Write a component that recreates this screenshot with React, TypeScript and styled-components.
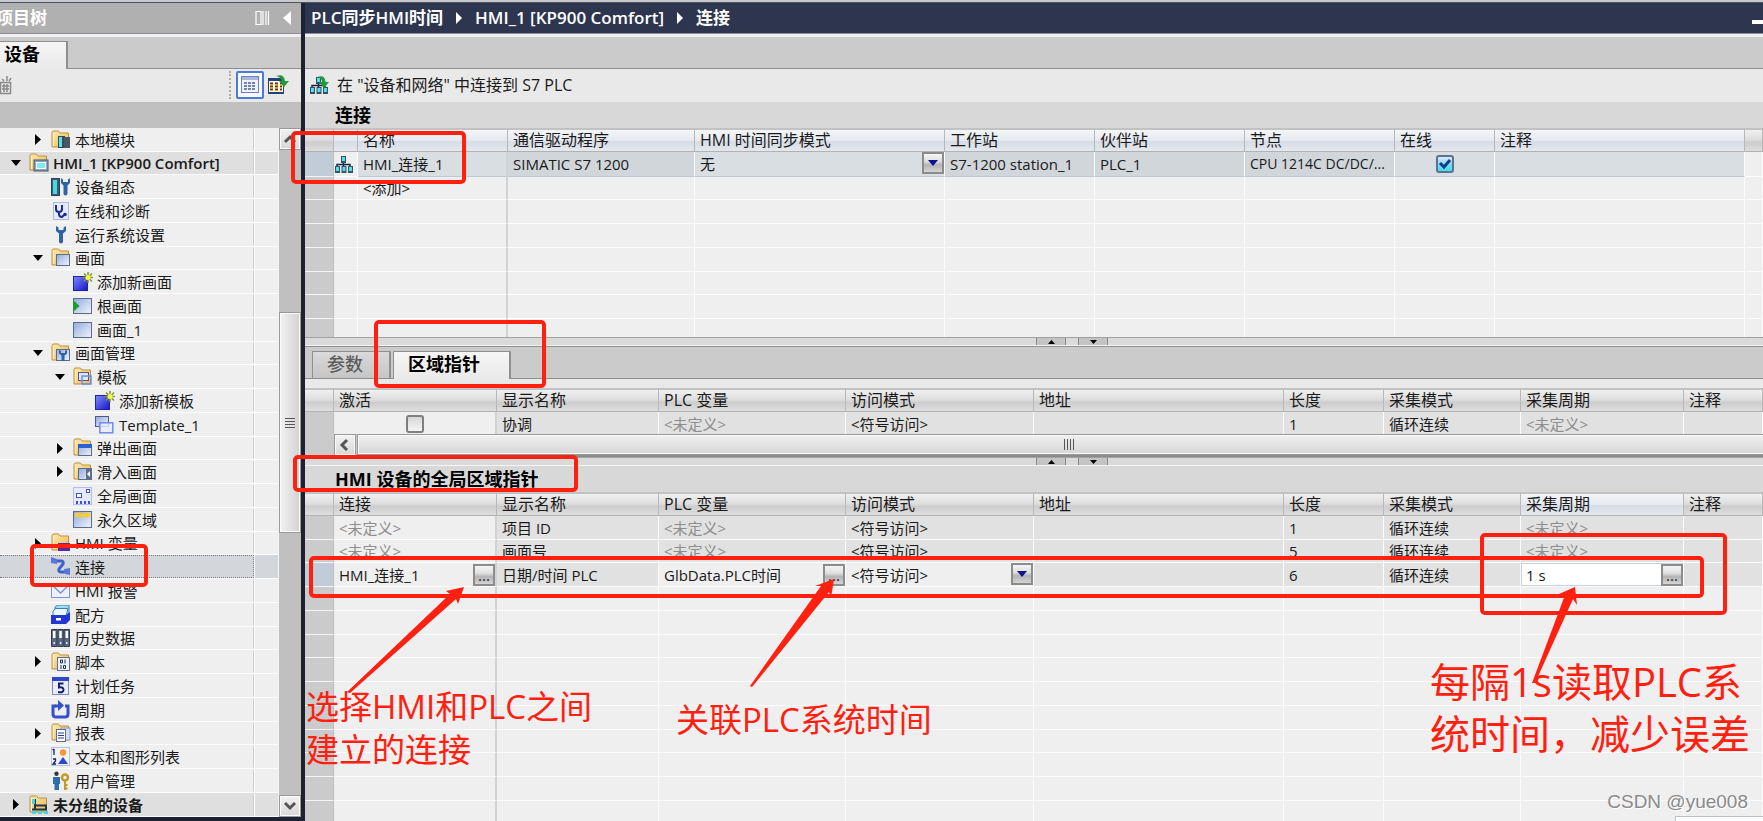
import React from 'react';
import styled, { createGlobalStyle, css } from 'styled-components';

const Global = createGlobalStyle`
  *, *::before, *::after { box-sizing: border-box; }
  html, body { margin: 0; height: 100%; overflow: hidden; }
  body {
    font-family: "Open Sans", "Noto Sans CJK SC", sans-serif;
    font-size: 15px;
    line-height: 20px;
    color: #1a1a1a;
    background: #efefef;
  }
  button, input, select { font: inherit; color: inherit; margin: 0; }
  svg { flex: none; }
`;

const rowRhythm = css`
  height: 24px;
  &:nth-child(4n + 2) { height: 23px; }
`;

/* ---------- frame ---------- */
const Page = styled.div`
  position: relative;
  display: flex;
  flex-direction: column;
  height: 100vh;
  overflow: hidden;
`;
const TopEdge = styled.div`
  flex: none;
  height: 3px;
  background: #c9c9c9;
  border-bottom: 1px solid #4b5468;
`;
const Body = styled.div`
  flex: 1;
  min-height: 0;
  display: flex;
`;
const TitleBar = styled.header<{ $dark?: boolean }>`
  flex: none;
  display: flex;
  align-items: center;
  height: 31px;
  padding-right: ${p => (p.$dark ? '0' : '8px')};
  background: ${p => (p.$dark ? '#2e364f' : '#b0b0b0')};
  border-bottom: 1px solid #8c8f99;
  color: #fff;
  font-size: 17px;
  font-weight: 600;
  white-space: nowrap;
`;
const TabStrip = styled.div<{ $plain?: boolean }>`
  flex: none;
  display: flex;
  align-items: flex-end;
  gap: 2px;
  height: ${p => (p.$plain ? '33px' : '35px')};
  padding-left: ${p => (p.$plain ? '7px' : '0')};
  background: #cbcbcb;
  border-top: ${p => (p.$plain ? '1px solid #8f8f8f' : '3px solid #f0f0f2')};
  border-bottom: 1px solid #8f8f8f;
`;
const Tab = styled.button<{ $active?: boolean; $w?: number }>`
  width: ${p => (p.$w ? `${p.$w}px` : 'auto')};
  height: ${p => (p.$active ? '28px' : '27px')};
  margin-bottom: ${p => (p.$active ? '-1px' : '0')};
  padding: 0 0 3px 14px;
  border: 1px solid #8f8f8f;
  border-bottom: 0;
  border-right-width: 2px;
  background: ${p => (p.$active ? 'linear-gradient(#f6f6f6, #e9e9e9)' : 'linear-gradient(#dadada, #cfcfcf 50%, #c6c6c6)')};
  color: ${p => (p.$active ? '#000' : '#5c5c5c')};
  font-size: 18px;
  line-height: 22px;
  font-weight: ${p => (p.$active ? 700 : 500)};
  text-align: left;
  white-space: nowrap;
`;
const ToolBar = styled.div`
  flex: none;
  display: flex;
  align-items: center;
  height: 33px;
  padding-bottom: 2px;
  background: #e9e9e9;
  white-space: nowrap;
`;

/* ---------- project tree ---------- */
const Sidebar = styled.aside`
  flex: none;
  display: flex;
  flex-direction: column;
  width: 305px;
  border-right: 4px solid #1c2233;
  border-bottom: 4px solid #1c2233;
  background: #c0c0c0;
`;
const SideTools = styled(ToolBar)`
  padding-right: 9px;
`;
const SideTitle = styled.span`
  flex: 1;
  margin-left: -4px;
`;
const SideTab = styled(Tab)`
  padding-left: 4px;
  border-left: 0;
`;
const IconButton = styled.button<{ $on?: boolean }>`
  display: flex;
  align-items: center;
  justify-content: center;
  width: 28px;
  height: 28px;
  padding: 0;
  border: ${p => (p.$on ? '2px solid #4a7bd8' : '0')};
  border-radius: 2px;
  background: ${p => (p.$on ? '#f7f9ff' : 'none')};
`;
const Clipped = styled(IconButton)`
  width: 12px;
  margin-right: auto;
  justify-content: flex-end;
  overflow: hidden;
`;
const Dots = styled.span`
  height: 28px;
  margin-right: 5px;
  border-left: 2px dotted #aaa;
`;
const TreeArea = styled.div`
  flex: 1;
  min-height: 0;
  display: flex;
  margin-top: 26px;
  overflow: hidden;
`;
const Tree = styled.ul`
  flex: 1;
  margin: 0;
  padding: 0;
  list-style: none;
  background: #efefef;
`;
const TreeRow = styled.li<{ $strong?: boolean; $sel?: boolean }>`
  ${rowRhythm}
  display: flex;
  border-bottom: 1px solid #fcfcfc;
  background: ${p => (p.$sel ? '#d3d7db' : p.$strong ? '#dfdfdf' : '#efefef')};
  font-weight: ${p => (p.$strong ? 600 : 400)};
`;
const TreeCell = styled.div<{ $level: number; $sel?: boolean }>`
  flex: 1;
  display: flex;
  align-items: center;
  padding-left: ${p => p.$level * 22 - 15}px;
  border: 1px ${p => (p.$sel ? 'dotted #777' : 'solid transparent')};
  border-left: 0;
  border-right: ${p => (p.$sel ? '1px dotted #777' : '1px solid #cdcdcd')};
  white-space: nowrap;
`;
const TreeSide = styled.div`
  flex: none;
  width: 24px;
  border-left: 1px solid #fff;
`;
const Toggle = styled.button`
  display: flex;
  align-items: center;
  justify-content: center;
  flex: none;
  width: 18px;
  height: 18px;
  margin-right: 4px;
  padding: 0;
  border: 0;
  background: none;
`;
const ToggleGap = styled.span`
  flex: none;
  width: 22px;
`;
const TreeLabel = styled.span`
  margin-left: 4px;
`;

/* ---------- scroll bars ---------- */
const VScroll = styled.div`
  flex: none;
  display: flex;
  flex-direction: column;
  width: 23px;
  border-left: 1px solid #f2f2f2;
  background: #c0c0c0;
`;
const ScrollButton = styled.button`
  display: flex;
  align-items: center;
  justify-content: center;
  flex: none;
  width: 22px;
  height: 22px;
  padding: 0;
  border: 1px solid #9a9a9a;
  background: linear-gradient(#f2f2f2, #d8d8d8);
  box-shadow: inset 0 0 0 1px #fafafa;
`;
const VGap = styled.div`
  height: 162px;
`;
const VFill = styled.div`
  flex: 1;
`;
const VThumb = styled.div`
  display: flex;
  flex-direction: column;
  align-items: center;
  justify-content: center;
  gap: 2px;
  height: 221px;
  border: 1px solid #9a9a9a;
  background: linear-gradient(90deg, #f2f2f2, #d2d2d2);
  box-shadow: inset 0 0 0 1px #fafafa;
`;
const VGrip = styled.i`
  width: 10px;
  height: 1px;
  background: #555;
`;
const HScroll = styled.div`
  flex: none;
  display: flex;
  height: 23px;
  padding-left: 29px;
  gap: 1px;
  background: #cbcbcb;
  border-bottom: 2px solid #8a8a8a;
`;
const HThumb = styled.div`
  flex: 1;
  display: flex;
  align-items: center;
  justify-content: center;
  gap: 2px;
  margin-right: -17px;
  border: 1px solid #9a9a9a;
  background: linear-gradient(#f0f0f0, #d6d6d6);
  box-shadow: inset 0 0 0 1px #fafafa;
`;
const HGrip = styled.i`
  width: 1px;
  height: 11px;
  background: #555;
`;

/* ---------- editor ---------- */
const Main = styled.main`
  flex: 1;
  min-width: 0;
  display: flex;
  flex-direction: column;
  background: #efefef;
`;
const Crumbs = styled.nav`
  flex: 1;
  display: flex;
  align-items: center;
  gap: 13px;
  padding-left: 6px;
`;
const Crumb = styled.a`
  color: inherit;
  text-decoration: none;
`;
const Minimize = styled.button`
  width: 11px;
  height: 4px;
  margin-top: 8px;
  padding: 0;
  border: 0;
  background: #fff;
`;
const ToolLink = styled.button`
  display: flex;
  align-items: center;
  gap: 8px;
  padding: 0 4px;
  border: 0;
  background: none;
  font-size: 16px;
`;
const Caption = styled.h2`
  flex: none;
  height: 26px;
  margin: 0;
  padding-left: 30px;
  background: #d8d8d8;
  color: #000;
  font-size: 18px;
  line-height: 26px;
  font-weight: 700;
`;
const Spacer = styled.div`
  flex: none;
  height: 9px;
  background: #e9e9e9;
`;
const Pane = styled.section<{ $height?: number }>`
  flex: ${p => (p.$height ? 'none' : '1')};
  height: ${p => (p.$height ? `${p.$height}px` : 'auto')};
  min-height: 0;
  overflow: hidden;
`;
const Splitter = styled.div`
  flex: none;
  display: flex;
  justify-content: center;
  gap: 12px;
  height: 9px;
  padding-left: 76px;
  border-top: 1px solid #a2a2a2;
  border-bottom: 1px solid #f5f5f5;
  background: #dadada;
`;
const SplitButton = styled.button`
  display: flex;
  align-items: center;
  justify-content: center;
  width: 30px;
  height: 7px;
  padding: 0;
  border: solid #8a8a8a;
  border-width: 0 1px;
  background: #c4c4c4;
`;

const Grid = styled.table`
  width: 100%;
  table-layout: fixed;
  border-collapse: separate;
  border-spacing: 0;
`;
const Head = styled.th<{ $tone?: 'blue' | 'grey' }>`
  height: 24px;
  padding: 0 5px 1px;
  border-top: 2px solid #c2c2c2;
  border-bottom: 1px solid #b2b2b2;
  border-right: 1px solid #b8b8b8;
  background: ${p => (p.$tone === 'blue'
    ? 'linear-gradient(#f3f5f7, #e6eaef 50%, #d6dce6 55%, #e4e8ee)'
    : 'linear-gradient(#f0f0f0, #dedede 45%, #cdcdcd 60%, #dedede)')};
  font-size: 16px;
  line-height: 20px;
  font-weight: 400;
  text-align: left;
  white-space: nowrap;
  overflow: hidden;
`;
const Row = styled.tr`
  ${rowRhythm}
`;
const LinkRow = styled.tr`
  height: 25px;
`;
type Tone = 'plain' | 'off' | 'sel' | 'selLight' | 'white';
const tones: Record<Tone, string> = {
  plain: '#efefef', off: '#e1e1e1', sel: '#d1d6db', selLight: '#d9dee3', white: '#ffffff',
};
const Cell = styled.td<{ $tone?: Tone; $frozen?: boolean; $muted?: boolean; $flush?: boolean; $small?: boolean }>`
  position: relative;
  padding: ${p => (p.$flush ? '0' : '0 0 0 5px')};
  border-bottom: 1px solid ${p => (p.$tone === 'sel' || p.$tone === 'selLight' ? '#bccad8' : '#fcfcfc')};
  border-right: ${p => (p.$frozen ? '2px solid #d2d2d2' : '1px solid #fcfcfc')};
  background: ${p => tones[p.$tone || 'plain']};
  color: ${p => (p.$muted ? '#8e8e8e' : 'inherit')};
  font-size: ${p => (p.$small ? '14px' : 'inherit')};
  line-height: 20px;
  white-space: nowrap;
  overflow: hidden;
  text-overflow: ellipsis;
  ${p => p.$tone === 'white' && css`box-shadow: inset 0 0 0 1px #c6d2e0;`}
`;
const Gutter = styled.td<{ $on?: boolean }>`
  padding: 0;
  border-right: 1px solid #bdbdbd;
  border-bottom: 1px solid #f4f4f4;
  background: ${p => (p.$on ? '#c1ccd8' : '#cbcbcb')};
`;
const Check = styled.input`
  appearance: none;
  display: block;
  width: 18px;
  height: 18px;
  margin: 0 auto;
  border: 2px solid #7f7f7f;
  border-radius: 3px;
  background: linear-gradient(#d8d8d8, #f4f4f4);
  &:checked {
    border-color: #5a7390;
    background:
      linear-gradient(#dce8ff, #8fd4ee 50%, #3fe0f0);
  }
`;
const CheckWrap = styled.label`
  position: relative;
  display: block;
  width: 18px;
  margin: 0 auto;
  svg { position: absolute; left: 2px; top: 2px; }
`;
const Field = styled.div`
  display: flex;
  align-items: center;
  height: 22px;
`;
const TextBox = styled.input`
  flex: 1;
  min-width: 0;
  height: 20px;
  padding: 0 5px;
  border: 0;
  outline: 0;
  background: none;
`;
const Choice = styled.select`
  appearance: none;
  width: 100%;
  height: 22px;
  padding: 0 24px 0 5px;
  border: 0;
  background: none;
`;
const smallButton = css`
  display: flex;
  justify-content: center;
  width: 22px;
  height: 22px;
  border: 2px solid #8c8c8c;
  background: linear-gradient(#f4f4f4, #e0e0e0 40%, #b4b4b4 60%, #d4d4d4);
`;
const More = styled.button`
  ${smallButton}
  flex: none;
  padding: 0;
  align-items: flex-end;
  color: #222;
  line-height: 18px;
`;
const DropArrow = styled.span`
  ${smallButton}
  position: absolute;
  right: 0;
  top: 0;
  align-items: center;
  pointer-events: none;
`;

/* ---------- annotations ---------- */
const Notes = styled.div`
  position: absolute;
  inset: 0;
  pointer-events: none;
  overflow: hidden;
`;
const Frame = styled.div<{ $x: number; $y: number; $w: number; $h: number }>`
  position: absolute;
  left: ${p => p.$x}px;
  top: ${p => p.$y}px;
  width: ${p => p.$w}px;
  height: ${p => p.$h}px;
  border: 4px solid #ff2010;
  border-radius: 5px;
`;
const Note = styled.p<{ $x: number; $y: number; $big?: boolean }>`
  position: absolute;
  left: ${p => p.$x}px;
  top: ${p => p.$y}px;
  margin: 0;
  color: #ff2010;
  font-size: ${p => (p.$big ? 40 : 33)}px;
  line-height: ${p => (p.$big ? 52 : 43)}px;
  font-weight: 400;
  white-space: nowrap;
`;
const Arrows = styled.svg`
  position: absolute;
  left: 0;
  top: 0;
`;
const Watermark = styled.div`
  position: absolute;
  right: 15px;
  bottom: 7px;
  color: #8a8a8a;
  font-family: "Liberation Sans", sans-serif;
  font-size: 19px;
  line-height: 24px;
  text-shadow: 1px 1px 0 #fff;
`;
const Popup = styled.div`
  position: absolute;
  right: 0;
  bottom: 0;
  width: 88px;
  height: 5px;
  border: solid #b4c2d6;
  border-width: 1px 0 0 1px;
  background: #fff;
`;

/* ---------- icons ---------- */
type IconName =
  | 'module' | 'hmi' | 'config' | 'diag' | 'wrench' | 'screens' | 'add' | 'root' | 'screen'
  | 'manage' | 'templates' | 'template' | 'popup' | 'slidein' | 'global' | 'permanent' | 'tags'
  | 'link' | 'alarm' | 'recipe' | 'history' | 'script' | 'task' | 'cycle' | 'report' | 'lists'
  | 'users' | 'devices';

const Folder = () => (
  <>
    <path d="M1 2.500 L2 1 H7.500 L9 3 H17.500 V17 H1 Z" fill="url(#folder)" stroke="#c0913c" />
    <path d="M2.500 3 V16" stroke="#fff3cf" />
  </>
);
const Sheet = ({ x = 5, y = 6, w = 14, h = 12 }: { x?: number; y?: number; w?: number; h?: number }) => (
  <rect x={x + 0.5} y={y + 0.5} width={w - 1} height={h - 1} fill="url(#sheet)" stroke="#5b6b8c" />
);
const wrenchPath = 'M5 1 V6 L8 8.500 V17 Q10 20 12 17 V8.500 L15 6 V1 L12.500 2.500 V5 H7.500 V2.500 Z';

const drawings: Record<IconName, React.ReactNode> = {
  module: <><Folder /><rect x="7" y="6" width="7" height="12" fill="#3a4a5c" /><rect x="8" y="7" width="3" height="10" fill="#5ce0e6" /><rect x="13" y="7" width="6" height="11" fill="#4a5866" /></>,
  hmi: <><Folder /><rect x="5" y="7" width="14" height="11" fill="#8ea3bb" stroke="#47566e" /><rect x="7.500" y="9.500" width="9" height="6" fill="#7ceaf0" stroke="#fff" /></>,
  config: <><rect x=".500" y="1.500" width="8" height="17" fill="#3d5a72" stroke="#2c4258" /><rect x="2" y="3" width="4" height="14" fill="#46dbe3" /><path d="M10 1 V6 L12.500 8.500 V17 Q14.500 20 16.500 17 V8.500 L19 6 V1 L17 2.500 V5 H12 V2.500 Z" fill="#2d63a8" /></>,
  diag: <><rect x="2.500" y="1.500" width="15" height="17" fill="#e4e9fb" stroke="#aeb8dc" /><path d="M5 4 V8 Q5 11 8 11 Q11 11 11 8 V4 M8 11 V13 Q8 16 11 16 L13 14" fill="none" stroke="#1d2a8c" strokeWidth="2" /><circle cx="14" cy="13.500" r="1.800" fill="#1d2a8c" /></>,
  wrench: <path d={wrenchPath} fill="#2d63a8" />,
  screens: <><Folder /><Sheet /></>,
  add: <><rect x=".500" y="4.500" width="14" height="14" fill="url(#blue)" stroke="#1d22a8" /><path d="M15 0 V11 M9.500 5.500 H20 M11 1.500 L19 9.500 M19 1.500 L11 9.500" stroke="#7f9a2a" strokeWidth="1.500" /><circle cx="15" cy="5.500" r="2.500" fill="#f8f84a" /></>,
  root: <><Sheet x={0} y={2} w={19} h={16} /><path d="M0 4 L6.500 10 L0 16 Z" fill="#1d9a30" /></>,
  screen: <Sheet x={0} y={2} w={19} h={16} />,
  manage: <><Folder /><Sheet /><path d="M8 7 V10.500 L10.500 12.500 V18 H13.500 V12.500 L16 10.500 V7 L14 8 V10 H10 V8 Z" fill="#2d63a8" /></>,
  templates: <><Folder /><rect x="5.500" y="5.500" width="10" height="8" fill="#dfe6f8" stroke="#4d5c84" /><rect x="9" y="9" width="9" height="8" fill="none" stroke="#6d8cf0" strokeWidth="1.500" /></>,
  template: <><rect x=".500" y="1.500" width="13" height="10" fill="url(#sheet)" stroke="#4d5c84" /><rect x="4.800" y="7.800" width="13" height="10" fill="#e8eeff" fillOpacity=".8" stroke="#6d8cf0" strokeWidth="1.500" /></>,
  popup: <><Folder /><Sheet /><rect x="5" y="6" width="14" height="4" fill="#2c5fd0" /></>,
  slidein: <><Folder /><Sheet /><rect x="13" y="6" width="6" height="12" fill="#5f6f88" /><path d="M17 9 V15 L14 12 Z" fill="#fff" /></>,
  global: <><rect x=".500" y="1.500" width="18" height="17" fill="#e6eaff" stroke="#b4bce8" /><rect x="3.500" y="7.500" width="5" height="4" fill="#fff" stroke="#3d50d8" /><rect x="13.500" y="3.500" width="3" height="3" fill="#fff" stroke="#3d50d8" /><path d="M3 16.500 H17" stroke="#3d50d8" strokeWidth="3" strokeDasharray="2 2" /></>,
  permanent: <><Sheet x={0} y={1} w={19} h={17} /><rect x="2" y="3" width="15" height="4" fill="#ffcb2d" /></>,
  tags: <><Folder /><rect x="7" y="10" width="12" height="8" fill="#5a2a9c" /><path d="M9 14 H17" stroke="#fff" strokeWidth="2" /></>,
  link: <><path d="M4 4 H10 Q13 4 12 7 L8 12 Q7 15 10 15 H16" fill="none" stroke="#3f62cc" strokeWidth="3" /><path d="M0 0 L6 2 V7 L0 6 Z M13 12 L19 11 V18 L14 17 Z" fill="#5878d8" /></>,
  alarm: <><rect x=".500" y="3.500" width="18" height="13" fill="#eef2ff" stroke="#7f92e0" /><path d="M1 4 L9.500 12 L18 4" fill="none" stroke="#7f92e0" strokeWidth="1.500" /></>,
  recipe: <><path d="M4 2 L7 0 H18 V8 L15 11 H4 Z" fill="#9fdcf2" stroke="#3a7fb8" /><path d="M2 6 L5 3.500 H17 L15 11 H2 Z" fill="#e8f8ff" stroke="#3a7fb8" /><path d="M0 10 H15 L19 7 V15 L15 19 H0 Z" fill="#2236d4" /><rect x="5" y="13" width="5" height="2.500" fill="#fff" /></>,
  history: <><path d="M.500 1.500 H6 V18.500 H.500 Z M6.800 1.500 H12.300 V18.500 H6.800 Z M13 1.500 H18.500 V18.500 H13 Z" fill="#5b6a84" stroke="#2f3b52" /><path d="M3.200 3 V10 M9.500 3 V10 M15.800 3 V10" stroke="#fff" strokeWidth="2.500" /><path d="M2.500 15 H4 M8.800 15 H10.300 M15 15 H16.500" stroke="#dfe8f4" strokeWidth="2" /></>,
  script: <><Folder /><rect x="6.500" y="5.500" width="12" height="13" fill="#eef4fc" stroke="#5b7296" /><path d="M9.500 8 H11.500 V11 H9.500 Z M10 13 V17 M12.500 13.500 H14.500 V16.500 H12.500 Z M14 7.500 V11.500" fill="none" stroke="#1d2c6c" /></>,
  task: <><rect x="1.500" y="1.500" width="16" height="17" fill="#e9edff" stroke="#7c8cc0" /><rect x="1" y="1" width="17" height="4" fill="#2f48c8" /><path d="M12.500 7.500 H8 V11.500 Q12.500 10.500 12.500 14 Q12.500 17 7 16" fill="none" stroke="#17206c" strokeWidth="2" /></>,
  cycle: <><path d="M5 6 H2 V14 Q2 17 5 17 H14 Q17 17 17 14 V6 H14" fill="none" stroke="#3450cc" strokeWidth="3" /><path d="M4 4.500 H7 V0 L13 5.500 L7 11 V7.500 H4 Z" fill="#3450cc" /></>,
  report: <><Folder /><rect x="10" y="5" width="9" height="12" fill="#d5dcf4" stroke="#8a9ac8" /><rect x="5.500" y="6.500" width="9" height="12" fill="#fff" stroke="#5b6b9c" /><path d="M7 10 H13 M7 12.500 H13 M7 15 H13" stroke="#2a3a8c" strokeWidth="1.200" /></>,
  lists: <><rect x=".500" y=".500" width="18" height="18" fill="#f0f3ff" stroke="#b8c0e4" /><path d="M3 2 V8 M1.500 3 L3 2 M2 12 H4.500 V14 L2 17 H5" fill="none" stroke="#17206c" strokeWidth="1.300" /><circle cx="12" cy="5.500" r="3.200" fill="#f59a2c" /><path d="M12 10 L17 17 H7 Z" fill="#2c48c8" /></>,
  users: <><circle cx="5.500" cy="2.800" r="2.200" fill="#3c3430" /><path d="M2 6 H9 V13 H8 V19 H3.500 V13 H2 Z" fill="#2d6ea8" /><circle cx="14" cy="6.500" r="3" fill="none" stroke="#c49a28" strokeWidth="2.500" /><path d="M14 10 V19 M14 14 H16.500 M14 17.500 H16.500" stroke="#c49a28" strokeWidth="2" /></>,
  devices: <><Folder /><path d="M6 10.500 H18 M6 4 V15 M17 10 V15 M3 14.500 H18" stroke="#263248" strokeWidth="2" /><rect x="3" y="4" width="3" height="5" fill="#43d8e0" /><rect x="3" y="16" width="4" height="3" fill="#43d8e0" /><rect x="9" y="16" width="4" height="3" fill="#43d8e0" /><rect x="15" y="16" width="4" height="3" fill="#43d8e0" /></>,
};

const Defs = styled.svg`
  position: absolute;
`;
const IconDefs = () => (
  <Defs width="0" height="0" aria-hidden="true">
    <defs>
      <linearGradient id="folder" x1="0" y1="0" x2="1" y2="1"><stop offset="0" stopColor="#ffe9ae" /><stop offset="1" stopColor="#e9b955" /></linearGradient>
      <linearGradient id="sheet" x1="0" y1="0" x2="1" y2="1"><stop offset="0" stopColor="#93a9dc" /><stop offset="1" stopColor="#f2f5fd" /></linearGradient>
      <linearGradient id="blue" x1="0" y1="0" x2="1" y2="1"><stop offset="0" stopColor="#7f8cff" /><stop offset="1" stopColor="#1414c8" /></linearGradient>
    </defs>
  </Defs>
);
const Icon = ({ name }: { name: IconName }) => (
  <svg width="20" height="20" viewBox="0 0 20 20" aria-hidden="true">{drawings[name]}</svg>
);
const Net = ({ arrow }: { arrow?: boolean }) => (
  <svg width="20" height="20" viewBox="0 0 20 20" aria-hidden="true">
    <path d="M9.500 7 V13 M3 14 V10.500 H16 V14" fill="none" stroke="#1a2440" strokeWidth="1.500" />
    {[[7, 2], [1, 12], [7.500, 12], [14, 12]].map(([x, y]) => (
      <g key={`${x}-${y}`}><rect x={x} y={y} width="5" height="7" fill="#3a4e68" /><rect x={x + 1} y={y + 1} width="3" height="4" fill="#4be3ea" /></g>
    ))}
    {arrow && <path d="M8 2 Q16 -1 16.500 7 H20 L15 13 L10 7 H13 Q13 3 8 2 Z" fill="#239a3a" />}
  </svg>
);
const Tri = ({ dir, color = '#000', w = 10, h = 6 }: { dir: 'r' | 'd' | 'u' | 'l'; color?: string; w?: number; h?: number }) => {
  const pts = { d: `0,0 ${w},0 ${w / 2},${h}`, u: `0,${h} ${w},${h} ${w / 2},0`, r: `0,0 ${w},${h / 2} 0,${h}`, l: `${w},0 0,${h / 2} ${w},${h}` }[dir];
  return <svg width={w} height={h} aria-hidden="true"><polygon points={pts} fill={color} /></svg>;
};
const Chevron = ({ d }: { d: string }) => (
  <svg width="14" height="14" viewBox="0 0 14 14" aria-hidden="true"><path d={d} fill="none" stroke="#555" strokeWidth="3" /></svg>
);

/* ---------- data ---------- */
type Node = { label: string; icon: IconName; level: number; open?: boolean; strong?: boolean; sel?: boolean };
const nodes: Node[] = [
  { label: '本地模块', icon: 'module', level: 2, open: false },
  { label: 'HMI_1 [KP900 Comfort]', icon: 'hmi', level: 1, open: true, strong: true },
  { label: '设备组态', icon: 'config', level: 2 },
  { label: '在线和诊断', icon: 'diag', level: 2 },
  { label: '运行系统设置', icon: 'wrench', level: 2 },
  { label: '画面', icon: 'screens', level: 2, open: true },
  { label: '添加新画面', icon: 'add', level: 3 },
  { label: '根画面', icon: 'root', level: 3 },
  { label: '画面_1', icon: 'screen', level: 3 },
  { label: '画面管理', icon: 'manage', level: 2, open: true },
  { label: '模板', icon: 'templates', level: 3, open: true },
  { label: '添加新模板', icon: 'add', level: 4 },
  { label: 'Template_1', icon: 'template', level: 4 },
  { label: '弹出画面', icon: 'popup', level: 3, open: false },
  { label: '滑入画面', icon: 'slidein', level: 3, open: false },
  { label: '全局画面', icon: 'global', level: 3 },
  { label: '永久区域', icon: 'permanent', level: 3 },
  { label: 'HMI 变量', icon: 'tags', level: 2, open: false },
  { label: '连接', icon: 'link', level: 2, sel: true },
  { label: 'HMI 报警', icon: 'alarm', level: 2 },
  { label: '配方', icon: 'recipe', level: 2 },
  { label: '历史数据', icon: 'history', level: 2 },
  { label: '脚本', icon: 'script', level: 2, open: false },
  { label: '计划任务', icon: 'task', level: 2 },
  { label: '周期', icon: 'cycle', level: 2 },
  { label: '报表', icon: 'report', level: 2, open: false },
  { label: '文本和图形列表', icon: 'lists', level: 2 },
  { label: '用户管理', icon: 'users', level: 2 },
  { label: '未分组的设备', icon: 'devices', level: 1, open: false, strong: true },
];
const areaCols = [29, 163, 162, 187, 188, 250, 100, 137, 163];
const areaHeads = ['显示名称', 'PLC 变量', '访问模式', '地址', '长度', '采集模式', '采集周期', '注释'];
const linkCols = [29, 24, 150, 187, 250, 150, 150, 150, 100, 250];
const UNDEF = '<未定义>';

const Cols = ({ widths }: { widths: number[] }) => (
  <colgroup>{widths.map((w, i) => <col key={i} width={w} />)}<col /></colgroup>
);
const Blank = ({ rows, cols, frozen }: { rows: number; cols: number; frozen: number }) => (
  <>
    {Array.from({ length: rows }, (_, r) => (
      <Row key={r}>
        <Gutter />
        {Array.from({ length: cols }, (_, c) => <Cell key={c} $frozen={c === frozen} />)}
      </Row>
    ))}
  </>
);
const AreaHead = ({ first, hot }: { first: string; hot?: boolean }) => (
  <thead>
    <tr>
      <Head />
      <Head>{first}</Head>
      {areaHeads.map(h => <Head key={h} $tone={hot && h === '采集周期' ? 'blue' : 'grey'}>{h}</Head>)}
    </tr>
  </thead>
);
const SplitButtons = () => (
  <Splitter>
    <SplitButton aria-label="向上"><Tri dir="u" w={7} h={4} /></SplitButton>
    <SplitButton aria-label="向下"><Tri dir="d" w={7} h={4} /></SplitButton>
  </Splitter>
);

export default function App() {
  return (
    <Page>
      <Global />
      <IconDefs />
      <TopEdge />
      <Body>
        <Sidebar>
          <TitleBar>
            <SideTitle>项目树</SideTitle>
            <svg width="38" height="16" viewBox="0 0 38 16" aria-hidden="true">
              <path d="M1 1.500 H6 V14.500 H1 Z M8 1 V15 M11 1 V15 M13.500 1 V15" fill="none" stroke="#fff" strokeWidth="1.200" />
              <polygon points="28,8 36,1 36,15" fill="#fff" />
            </svg>
          </TitleBar>
          <TabStrip><SideTab $active $w={68}>设备</SideTab></TabStrip>
          <SideTools>
            <Clipped aria-label="新建">
              <svg width="20" height="20" viewBox="0 0 20 20" aria-hidden="true">
                <path d="M8.500 7.500 H18.500 V18.500 H8.500 Z M10 4 L12 6 M15 1 V6 M19 3 L17 6 M10 11 H17 M12 9 V17 M15 9 V17 M10 14 H17" fill="none" stroke="#8a8a8a" strokeWidth="1.500" />
              </svg>
            </Clipped>
            <Dots />
            <IconButton $on aria-label="详细视图">
              <svg width="20" height="20" viewBox="0 0 20 20" aria-hidden="true">
                <rect x="1.500" y="1.500" width="17" height="16" fill="#eef2fb" stroke="#6d84b4" />
                <rect x="2" y="2" width="16" height="3" fill="#a9b8dc" />
                <path d="M4 8 H16 M4 11 H16 M4 14 H16" stroke="#4a5f94" strokeWidth="1.500" strokeDasharray="3 1" />
              </svg>
            </IconButton>
            <IconButton aria-label="转到总览">
              <svg width="22" height="22" viewBox="0 0 22 22" aria-hidden="true">
                <rect x="1" y="4" width="16" height="16" fill="#23427c" />
                <rect x="2" y="7" width="14" height="11" fill="#fff8dc" />
                <path d="M3 9.500 H15 M3 12.500 H15 M3 15.500 H15" stroke="#5a3420" strokeWidth="2" strokeDasharray="3 2" />
                <path d="M3 10.500 H15 M3 13.500 H15 M3 16.500 H15" stroke="#f0a02c" strokeWidth="1" strokeDasharray="3 2" />
                <path d="M9 2 Q17 -1 18 7 H22 L17 13 L12 7 H15 Q14 3 9 2 Z" fill="#239a3a" />
              </svg>
            </IconButton>
          </SideTools>
          <TreeArea>
            <Tree>
              {nodes.map(n => (
                <TreeRow key={n.label} $strong={n.strong} $sel={n.sel}>
                  <TreeCell $level={n.level} $sel={n.sel}>
                    {n.open === undefined ? <ToggleGap /> : (
                      <Toggle aria-label={n.label} aria-expanded={n.open}>
                        {n.open ? <Tri dir="d" /> : <Tri dir="r" w={6} h={11} />}
                      </Toggle>
                    )}
                    <Icon name={n.icon} />
                    <TreeLabel>{n.label}</TreeLabel>
                  </TreeCell>
                  <TreeSide />
                </TreeRow>
              ))}
            </Tree>
            <VScroll>
              <ScrollButton aria-label="向上滚动"><Chevron d="M2 10 L7 5 L12 10" /></ScrollButton>
              <VGap />
              <VThumb><VGrip /><VGrip /><VGrip /><VGrip /></VThumb>
              <VFill />
              <ScrollButton aria-label="向下滚动"><Chevron d="M2 4 L7 9 L12 4" /></ScrollButton>
            </VScroll>
          </TreeArea>
        </Sidebar>

        <Main>
          <TitleBar $dark>
            <Crumbs>
              <Crumb href="#project">PLC同步HMI时间</Crumb>
              <Tri dir="r" color="#fff" w={6} h={12} />
              <Crumb href="#hmi">HMI_1 [KP900 Comfort]</Crumb>
              <Tri dir="r" color="#fff" w={6} h={12} />
              <Crumb href="#connections">连接</Crumb>
            </Crumbs>
            <Minimize aria-label="最小化" />
          </TitleBar>
          <TabStrip />
          <ToolBar>
            <ToolLink><Net arrow />在 "设备和网络" 中连接到 S7 PLC</ToolLink>
          </ToolBar>
          <Caption>连接</Caption>
          <Pane $height={209}>
            <Grid>
              <Cols widths={linkCols} />
              <thead>
                <tr>
                  <Head />
                  <Head $tone="blue" />
                  {['名称', '通信驱动程序', 'HMI 时间同步模式', '工作站', '伙伴站', '节点', '在线', '注释'].map(h => (
                    <Head key={h} $tone="blue">{h}</Head>
                  ))}
                  <Head />
                </tr>
              </thead>
              <tbody>
                <LinkRow>
                  <Gutter $on />
                  <Cell $flush $tone="plain"><Field><Net /></Field></Cell>
                  <Cell $tone="selLight" $frozen>HMI_连接_1</Cell>
                  <Cell $tone="sel">SIMATIC S7 1200</Cell>
                  <Cell $tone="selLight" $flush>
                    <Choice aria-label="HMI 时间同步模式"><option>无</option></Choice>
                    <DropArrow><Tri dir="d" color="#10108c" /></DropArrow>
                  </Cell>
                  <Cell $tone="sel">S7-1200 station_1</Cell>
                  <Cell $tone="sel">PLC_1</Cell>
                  <Cell $tone="sel" $small>CPU 1214C DC/DC/...</Cell>
                  <Cell $tone="selLight" $flush>
                    <CheckWrap>
                      <Check type="checkbox" defaultChecked aria-label="在线" />
                      <svg width="14" height="14" viewBox="0 0 14 14" aria-hidden="true"><path d="M2 6 L6 10 L12 3" fill="none" stroke="#0d3f8c" strokeWidth="3" /></svg>
                    </CheckWrap>
                  </Cell>
                  <Cell $tone="selLight" />
                  <Cell />
                </LinkRow>
                <Row>
                  <Gutter />
                  <Cell />
                  <Cell $frozen>{'<添加>'}</Cell>
                  {Array.from({ length: 8 }, (_, i) => <Cell key={i} />)}
                </Row>
                <Blank rows={6} cols={10} frozen={1} />
              </tbody>
            </Grid>
          </Pane>
          <SplitButtons />
          <TabStrip $plain>
            <Tab $w={79}>参数</Tab>
            <Tab $active $w={118}>区域指针</Tab>
          </TabStrip>
          <Spacer />
          <Pane $height={46}>
            <Grid>
              <Cols widths={areaCols} />
              <AreaHead first="激活" />
              <tbody>
                <Row>
                  <Gutter />
                  <Cell $frozen $flush><Check type="checkbox" aria-label="激活" /></Cell>
                  <Cell $tone="off">协调</Cell>
                  <Cell $tone="off" $muted>{UNDEF}</Cell>
                  <Cell $tone="off">{'<符号访问>'}</Cell>
                  <Cell $tone="off" />
                  <Cell $tone="off">1</Cell>
                  <Cell $tone="off">循环连续</Cell>
                  <Cell $tone="off" $muted>{UNDEF}</Cell>
                  <Cell $tone="off" />
                </Row>
              </tbody>
            </Grid>
          </Pane>
          <HScroll>
            <ScrollButton aria-label="向左滚动"><Chevron d="M9 2 L4 7 L9 12" /></ScrollButton>
            <HThumb><HGrip /><HGrip /><HGrip /><HGrip /></HThumb>
          </HScroll>
          <SplitButtons />
          <Caption>HMI 设备的全局区域指针</Caption>
          <Pane>
            <Grid>
              <Cols widths={areaCols} />
              <AreaHead first="连接" hot />
              <tbody>
                {[['项目 ID', '1'], ['画面号', '5']].map(([name, len]) => (
                  <Row key={name}>
                    <Gutter />
                    <Cell $frozen $muted>{UNDEF}</Cell>
                    <Cell $tone="off">{name}</Cell>
                    <Cell $tone="off" $muted>{UNDEF}</Cell>
                    <Cell $tone="off">{'<符号访问>'}</Cell>
                    <Cell $tone="off" />
                    <Cell $tone="off">{len}</Cell>
                    <Cell $tone="off">循环连续</Cell>
                    <Cell $tone="off" $muted>{UNDEF}</Cell>
                    <Cell $tone="off" />
                  </Row>
                ))}
                <Row>
                  <Gutter $on />
                  <Cell $frozen $flush><Field><TextBox aria-label="连接" defaultValue="HMI_连接_1" /><More aria-label="选择连接">...</More></Field></Cell>
                  <Cell $tone="off">日期/时间 PLC</Cell>
                  <Cell $flush><Field><TextBox aria-label="PLC 变量" defaultValue="GlbData.PLC时间" /><More aria-label="选择变量">...</More></Field></Cell>
                  <Cell $flush>
                    <Choice aria-label="访问模式"><option>{'<符号访问>'}</option></Choice>
                    <DropArrow><Tri dir="d" color="#10108c" /></DropArrow>
                  </Cell>
                  <Cell $tone="off" />
                  <Cell $tone="off">6</Cell>
                  <Cell $tone="off">循环连续</Cell>
                  <Cell $tone="white" $flush><Field><TextBox aria-label="采集周期" defaultValue="1 s" /><More aria-label="选择周期">...</More></Field></Cell>
                  <Cell $tone="off" />
                </Row>
                <Blank rows={11} cols={9} frozen={0} />
              </tbody>
            </Grid>
          </Pane>
        </Main>
      </Body>

      <Notes>
        <Frame $x={291} $y={131} $w={175} $h={53} />
        <Frame $x={374} $y={320} $w={172} $h={68} />
        <Frame $x={293} $y={455} $w={285} $h={37} />
        <Frame $x={30} $y={544} $w={118} $h={43} />
        <Frame $x={309} $y={556} $w={1395} $h={42} />
        <Frame $x={1480} $y={533} $w={247} $h={82} />
        <Arrows width="1763" height="821" viewBox="0 0 1763 821" fill="#ff2010" aria-hidden="true">
          <polygon points="347,692 350,693 456,599 458,604 464,587 446,591 450,594" />
          <polygon points="750,686 752,687 829,592 831,598 834,579 815,586 821,586" />
          <polygon points="1532,683 1535,683 1573,599 1577,605 1575,587 1559,594 1565,595" />
        </Arrows>
        <Note $x={306} $y={685}>选择HMI和PLC之间<br />建立的连接</Note>
        <Note $x={676} $y={698}>关联PLC系统时间</Note>
        <Note $x={1430} $y={656} $big>每隔1s读取PLC系<br />统时间，减少误差</Note>
        <Watermark>CSDN @yue008</Watermark>
        <Popup />
      </Notes>
    </Page>
  );
}
